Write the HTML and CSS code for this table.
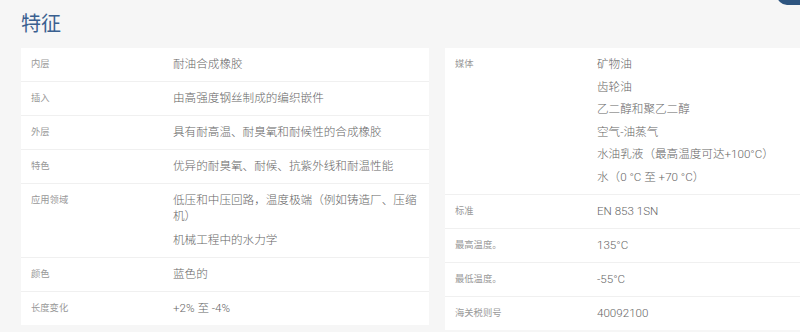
FILE: index.html
```html
<!DOCTYPE html>
<html lang="zh-CN">

<head>
    <meta charset="UTF-8">
    <meta name="viewport" content="width=device-width, initial-scale=1.0">
    <title>特征</title>
    <link rel="stylesheet" href="styles.css">
</head>

<body>
    <div class="top-tab"></div>

    <div class="features">
        <h2 class="features-title">特征</h2>

        <div class="features-grid">
            <!-- 左侧表格 -->
            <div class="spec-card">
                <div class="spec-row">
                    <div class="spec-label">内层</div>
                    <div class="spec-value"><p>耐油合成橡胶</p></div>
                </div>
                <div class="spec-row">
                    <div class="spec-label">插入</div>
                    <div class="spec-value"><p>由高强度钢丝制成的编织嵌件</p></div>
                </div>
                <div class="spec-row">
                    <div class="spec-label">外层</div>
                    <div class="spec-value"><p>具有耐高温、耐臭氧和耐候性的合成橡胶</p></div>
                </div>
                <div class="spec-row">
                    <div class="spec-label">特色</div>
                    <div class="spec-value"><p>优异的耐臭氧、耐候、抗紫外线和耐温性能</p></div>
                </div>
                <div class="spec-row">
                    <div class="spec-label">应用领域</div>
                    <div class="spec-value">
                        <p class="wrapped">低压和中压回路，温度极端（例如铸造厂、压缩机）</p>
                        <p>机械工程中的水力学</p>
                    </div>
                </div>
                <div class="spec-row">
                    <div class="spec-label">颜色</div>
                    <div class="spec-value"><p>蓝色的</p></div>
                </div>
                <div class="spec-row">
                    <div class="spec-label">长度变化</div>
                    <div class="spec-value"><p>+2% 至 -4%</p></div>
                </div>
            </div>

            <!-- 右侧表格 -->
            <div class="spec-card">
                <div class="spec-row">
                    <div class="spec-label">媒体</div>
                    <div class="spec-value">
                        <p>矿物油</p>
                        <p>齿轮油</p>
                        <p>乙二醇和聚乙二醇</p>
                        <p>空气-油蒸气</p>
                        <p>水油乳液（最高温度可达+100°C）</p>
                        <p>水（0 °C 至 +70 °C）</p>
                    </div>
                </div>
                <div class="spec-row">
                    <div class="spec-label">标准</div>
                    <div class="spec-value"><p>EN 853 1SN</p></div>
                </div>
                <div class="spec-row">
                    <div class="spec-label">最高温度。</div>
                    <div class="spec-value"><p>135°C</p></div>
                </div>
                <div class="spec-row">
                    <div class="spec-label">最低温度。</div>
                    <div class="spec-value"><p>-55°C</p></div>
                </div>
                <div class="spec-row">
                    <div class="spec-label">海关税则号</div>
                    <div class="spec-value"><p>40092100</p></div>
                </div>
            </div>
        </div>
    </div>
</body>

</html>
```

FILE: styles.css
```css
body {
    margin: 0;
    font-family: Roboto, "Noto Sans CJK SC", sans-serif;
    background-color: #f6f6f6;
    color: #555;
    overflow: hidden;
}

.top-tab {
    position: absolute;
    top: -30px;
    left: 777px;
    width: 60px;
    height: 35px;
    border-radius: 10px;
    background-color: #2e5580;
}

.features {
    padding: 10px 21px 0;
}

.features-title {
    margin: 0 0 10px;
    font-size: 20px;
    line-height: 28px;
    font-weight: 400;
    color: #3a6090;
}

.features-grid {
    display: grid;
    grid-template-columns: 408px 408px;
    gap: 16px;
    align-items: start;
}

.spec-card {
    background-color: #fff;
}

.spec-row {
    display: grid;
    grid-template-columns: 142px 1fr;
    padding: 8px 0 9px 10px;
    border-bottom: 1px solid #f0f0f0;
}

.spec-row:last-child {
    border-bottom: none;
}

.spec-label {
    font-size: 9.3px;
    line-height: 15px;
    color: #999;
}

.spec-value {
    display: flex;
    flex-direction: column;
    gap: 6.6px;
    font-size: 11.6px;
    line-height: 16px;
    font-weight: 300;
    color: #666;
}

.spec-value p {
    margin: 0;
}

.spec-value .wrapped {
    margin-bottom: 1.5px;
}
```
